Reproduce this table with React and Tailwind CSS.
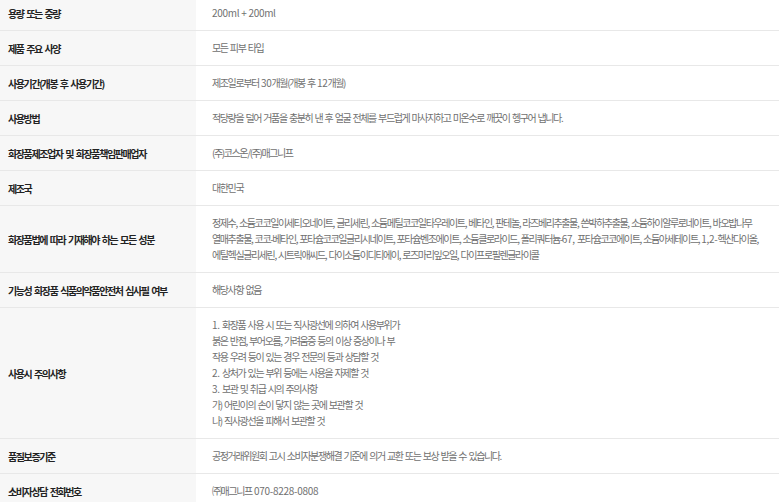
const ROWS = [
  { label: '용량 또는 중량', value: ['200ml + 200ml'] },
  { label: '제품 주요 사양', value: ['모든 피부 타입'] },
  { label: '사용기간(개봉 후 사용기간)', value: ['제조일로부터 30개월(개봉 후 12개월)'] },
  {
    label: '사용방법',
    value: ['적당량을 덜어 거품을 충분히 낸 후 얼굴 전체를 부드럽게 마사지하고 미온수로 깨끗이 헹구어 냅니다.'],
  },
  { label: '화장품제조업자 및 화장품책임판매업자', value: ['(주)코스온/(주)매그니프'] },
  { label: '제조국', value: ['대한민국'] },
  {
    label: '화장품법에 따라 기재해야 하는 모든 성분',
    value: [
      '정제수, 소듐코코일이세티오네이트, 글리세린, 소듐메틸코코일타우레이트, 베타인, 판테놀, 라즈베리추출물, 쓴박하추출물, 소듐하이알루로네이트, 바오밥나무',
      '열매추출물, 코코-베타인, 포타슘코코일글리시네이트, 포타슘벤조에이트, 소듐클로라이드, 폴리쿼터늄-67, 포타슘코코에이트, 소듐아세테이트, 1,2-헥산다이올,',
      '에틸헥실글리세린, 시트릭애씨드, 다이소듐이디티에이, 로즈마리잎오일, 다이프로필렌글라이콜',
    ],
  },
  { label: '기능성 화장품 식품의약품안전처 심사필 여부', value: ['해당사항 없음'] },
  {
    label: '사용시 주의사항',
    value: [
      '1. 화장품 사용 시 또는 직사광선에 의하여 사용부위가',
      '붉은 반점, 부어오름, 가려움증 등의 이상 증상이나 부',
      '작용 우려 등이 있는 경우 전문의 등과 상담할 것',
      '2. 상처가 있는 부위 등에는 사용을 자제할 것',
      '3. 보관 및 취급 시의 주의사항',
      '가) 어린이의 손이 닿지 않는 곳에 보관할 것',
      '나) 직사광선을 피해서 보관할 것',
    ],
  },
  { label: '품질보증기준', value: ['공정거래위원회 고시 소비자분쟁해결 기준에 의거 교환 또는 보상 받을 수 있습니다.'] },
  { label: '소비자상담 전화번호', value: ['㈜매그니프 070-8228-0808'] },
]

// latin/digit runs keep near-normal spacing, hangul is set tight
function Line({ text }) {
  const parts = text.split(/([0-9A-Za-z][0-9A-Za-z.,\-+ ]*[0-9A-Za-z.,\-]|[0-9A-Za-z])/)
  return (
    <div className="whitespace-nowrap">
      {parts.map((p, i) =>
        i % 2 === 1 ? (
          <span key={i} className="tracking-[-0.3px] [word-spacing:0px]">
            {p}
          </span>
        ) : (
          p
        ),
      )}
    </div>
  )
}

export default function App() {
  return (
    <div className="h-[502px] w-[779px] overflow-hidden bg-white font-['Noto_Sans_CJK_KR',sans-serif]">
      <div className="-mt-1">
        {ROWS.map((row) => (
          <div key={row.label} className="flex border-b border-[#e8e8e8]">
            <div className="flex w-[196px] shrink-0 items-center bg-[#f7f7f7] pl-2 text-[10px] font-bold tracking-[-1.4px] text-[#222] [word-spacing:1.8px]">
              {row.label}
            </div>
            <div className="flex-1 py-[9px] pl-4 text-[10px] leading-4 tracking-[-1.4px] text-[#707070] [word-spacing:1.4px]">
              {row.value.map((line) => (
                <Line key={line} text={line} />
              ))}
            </div>
          </div>
        ))}
      </div>
    </div>
  )
}
